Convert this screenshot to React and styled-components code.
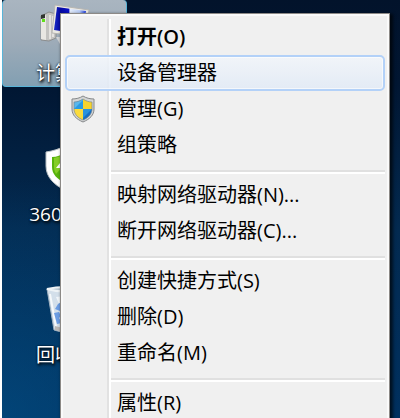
import React from 'react';
import styled, {createGlobalStyle, css} from 'styled-components';

const GlobalStyle = createGlobalStyle`
  * {
    box-sizing: border-box;
  }
  body {
    margin: 0;
    background: #fff;
    font-family: "Open Sans", "Noto Sans CJK SC", sans-serif;
    font-size: 20px;
  }
`;

const Desktop = styled.main`
  position: relative;
  height: 100vh;
  overflow: hidden;
  border-left: 2px solid #fff;
  background:
    radial-gradient(ellipse 260px 240px at 0 100%, rgba(4, 82, 136, .6), transparent),
    linear-gradient(#02132b, #011632 20%, #032a50 55%, #00305f);
`;

const Shortcuts = styled.div`
  display: flex;
  flex-direction: column;
  align-items: flex-start;
  gap: 54px;
`;

const Shortcut = styled.button`
  display: flex;
  flex-direction: column;
  align-items: center;
  justify-content: space-between;
  width: 125px;
  height: 87px;
  padding: 2px 0 0;
  border: 1px solid transparent;
  border-top: 0;
  border-radius: 0 0 4px 4px;
  background: none;
  color: #fff;
  font: inherit;
  font-size: 19px;
  line-height: 26px;
  white-space: nowrap;
  text-shadow: 1px 2px 3px #000, 0 0 2px #000;
  ${({$selected}) => $selected && css`
    border-color: #58b4d8;
    border-radius: 4px;
    background: linear-gradient(#a9b5c0, #9dabb8 50%, #829fb2);
  `}
`;

const Menu = styled.div`
  position: absolute;
  top: 13px;
  left: 58px;
  right: 10px;
  padding: 5px 4px;
  border: 1px solid #8c8986;
  box-shadow: inset 0 0 0 2px #fafafa, 2px 2px 3px 1px rgba(0, 0, 0, .65);
  background: linear-gradient(90deg, #e2e2e2 2px, #fff 2px) 46px 5px / 4px 100% no-repeat #f0f0f0;
`;

const Item = styled.button`
  display: grid;
  grid-template-columns: 32px 1fr;
  column-gap: 16px;
  align-items: center;
  width: 100%;
  height: 36px;
  padding: 0 2px;
  border: 2px solid transparent;
  border-radius: 5px;
  background: none;
  color: #000;
  font: inherit;
  font-weight: ${({$bold}) => ($bold ? 600 : 400)};
  line-height: 32px;
  text-align: left;
  white-space: nowrap;
  ${({$active}) => $active && css`
    border-color: #b3d1f8;
    background: linear-gradient(rgba(241, 245, 250, .85), rgba(225, 234, 246, .85)) padding-box;
    box-shadow: inset 0 0 0 1px rgba(255, 255, 255, .6);
  `}
`;

const ItemIcon = styled.span`
  display: flex;
  justify-content: center;
  width: 28px;
`;

const Separator = styled.hr`
  height: 4px;
  margin: 7px 0 3px 46px;
  border: 0;
  border-top: 2px solid #e0e0e0;
  border-bottom: 2px solid #fff;
`;

const ComputerIcon = () => (
  <svg width="50" height="48" viewBox="0 0 50 48" aria-hidden="true">
    <defs>
      <linearGradient id="screen" x1="0" y1="0" x2="1" y2="0">
        <stop offset="0" stopColor="#1a2cc8" />
        <stop offset=".2" stopColor="#0508a0" />
        <stop offset=".46" stopColor="#0a10c8" />
        <stop offset=".5" stopColor="#e4ecfa" />
        <stop offset=".8" stopColor="#b9cdf6" />
        <stop offset="1" stopColor="#1c3ce0" />
      </linearGradient>
    </defs>
    <path d="M1 14 9 10l7 2v24l-7 3-8-1z" fill="#c4c3c1" stroke="#8b8d8e" />
    <path d="M1 14l5-1v25l-5-1z" fill="#e9e7e3" />
    <path d="M1 13l4-1v4l-4 1z" fill="#30352f" />
    <path d="M2 17h3v3H2z" fill="#5fe01a" />
    <path d="M10 13v24M13 14v21" stroke="#e4e2df" strokeWidth="2" />
    <path d="M15 3 49 8l-4 27-33-4z" fill="#eceae4" stroke="#b7b6b2" />
    <path d="M17 5 46 9l-4 23-28-4z" fill="url(#screen)" />
    <path d="M16 35h18v7H20z" fill="#d3d5d7" />
  </svg>
);

const GreenShieldIcon = () => (
  <svg width="40" height="48" viewBox="0 0 40 48" aria-hidden="true">
    <path d="M20 3C14 6 8 8 1 9v14c0 11 8 19 19 24 11-5 19-13 19-24V9C32 8 26 6 20 3z" fill="#fff" stroke="#b9c0c4" />
    <path d="M20 10c-4 2-8 4-13 4v10c0 7 5 12 13 16 8-4 13-9 13-16V14c-5 0-9-2-13-4z" fill="#57b30c" />
    <path d="M20 11c-4 2-7 3-11 4v9c0 3 1 5 2 7l9-10z" fill="#84cd25" />
    <path d="M11 25 20 14l9 11H11z" fill="#fff" />
  </svg>
);

const RecycleBinIcon = () => (
  <svg width="38" height="48" viewBox="0 0 38 48" aria-hidden="true">
    <path d="M1 5 37 5 30 46q-11 4-22 0z" fill="#d3dfea" stroke="#9fb0bf" />
    <path d="M1 5q18-4 36 0-18 5-36 0z" fill="#b4c3d0" stroke="#eef3f6" strokeWidth="2" />
    <path d="M4 10 10 43" stroke="#f6f9fb" strokeWidth="2" fill="none" />
    <path d="M10 13 13 20 20 12z" fill="#f1f6fa" />
    <path d="M12 20 17 17l7 6-4 2-3-3-3 5-5-2zM8 29l5-1 2 4-2 2 3 5-5 1zM20 37l9-2 1-8-5-1-1 5-6 1z" fill="#6c9de3" />
    <path d="M9 42q10 3 20 0l-1 4q-9 3-19 0z" fill="#b9b7b5" />
  </svg>
);

const UacShieldIcon = () => (
  <svg width="24" height="28" viewBox="0 0 24 28" aria-hidden="true">
    <defs>
      <clipPath id="uac">
        <path d="M12 4C9 6 6 7 3 7v7c0 5 4 9 9 11 5-2 9-6 9-11V7c-3 0-6-1-9-3z" />
      </clipPath>
    </defs>
    <path d="M12 1C9 3 5 4 1 4v10c0 6 4 10 11 13 7-3 11-7 11-13V4c-4 0-8-1-11-3z" fill="#d4d5d5" stroke="#85888a" />
    <g clipPath="url(#uac)">
      <path d="M0 0h12v14H0z" fill="#299be4" />
      <path d="M12 0h12v14H12z" fill="#f8d32c" />
      <path d="M0 14h12v14H0z" fill="#fbdb3d" />
      <path d="M12 14h12v14H12z" fill="#176fc4" />
      <path d="M0 0h12v5L3 14H0z" fill="#79caf4" opacity=".6" />
      <path d="M12 14h9l-9 9z" fill="#2b92dc" />
    </g>
    <path d="M12 4C9 6 6 7 3 7v7c0 5 4 9 9 11 5-2 9-6 9-11V7c-3 0-6-1-9-3z" fill="none" stroke="#6f7e88" opacity=".6" />
  </svg>
);

const shortcuts = [
  {label: '计算机', Icon: ComputerIcon, selected: true},
  {label: '360杀毒', Icon: GreenShieldIcon},
  {label: '回收站', Icon: RecycleBinIcon},
];

const groups = [
  [
    {label: '打开(O)', bold: true},
    {label: '设备管理器', active: true},
    {label: '管理(G)', Icon: UacShieldIcon},
    {label: '组策略'},
  ],
  [{label: '映射网络驱动器(N)...'}, {label: '断开网络驱动器(C)...'}],
  [{label: '创建快捷方式(S)'}, {label: '删除(D)'}, {label: '重命名(M)'}],
  [{label: '属性(R)'}],
];

function App() {
  return (
    <Desktop>
      <GlobalStyle />
      <Shortcuts>
        {shortcuts.map(({label, Icon, selected}) => (
          <Shortcut key={label} type="button" $selected={selected}>
            <Icon />
            <span>{label}</span>
          </Shortcut>
        ))}
      </Shortcuts>

      {/* Context menu */}
      <Menu role="menu">
        {groups.map((items, index) => (
          <React.Fragment key={`group-${index}`}>
            {index > 0 && <Separator />}
            {items.map(({label, Icon, bold, active}) => (
              <Item key={label} type="button" role="menuitem" $bold={bold} $active={active}>
                <ItemIcon>{Icon && <Icon />}</ItemIcon>
                <span>{label}</span>
              </Item>
            ))}
          </React.Fragment>
        ))}
      </Menu>
    </Desktop>
  );
}

export default App;
